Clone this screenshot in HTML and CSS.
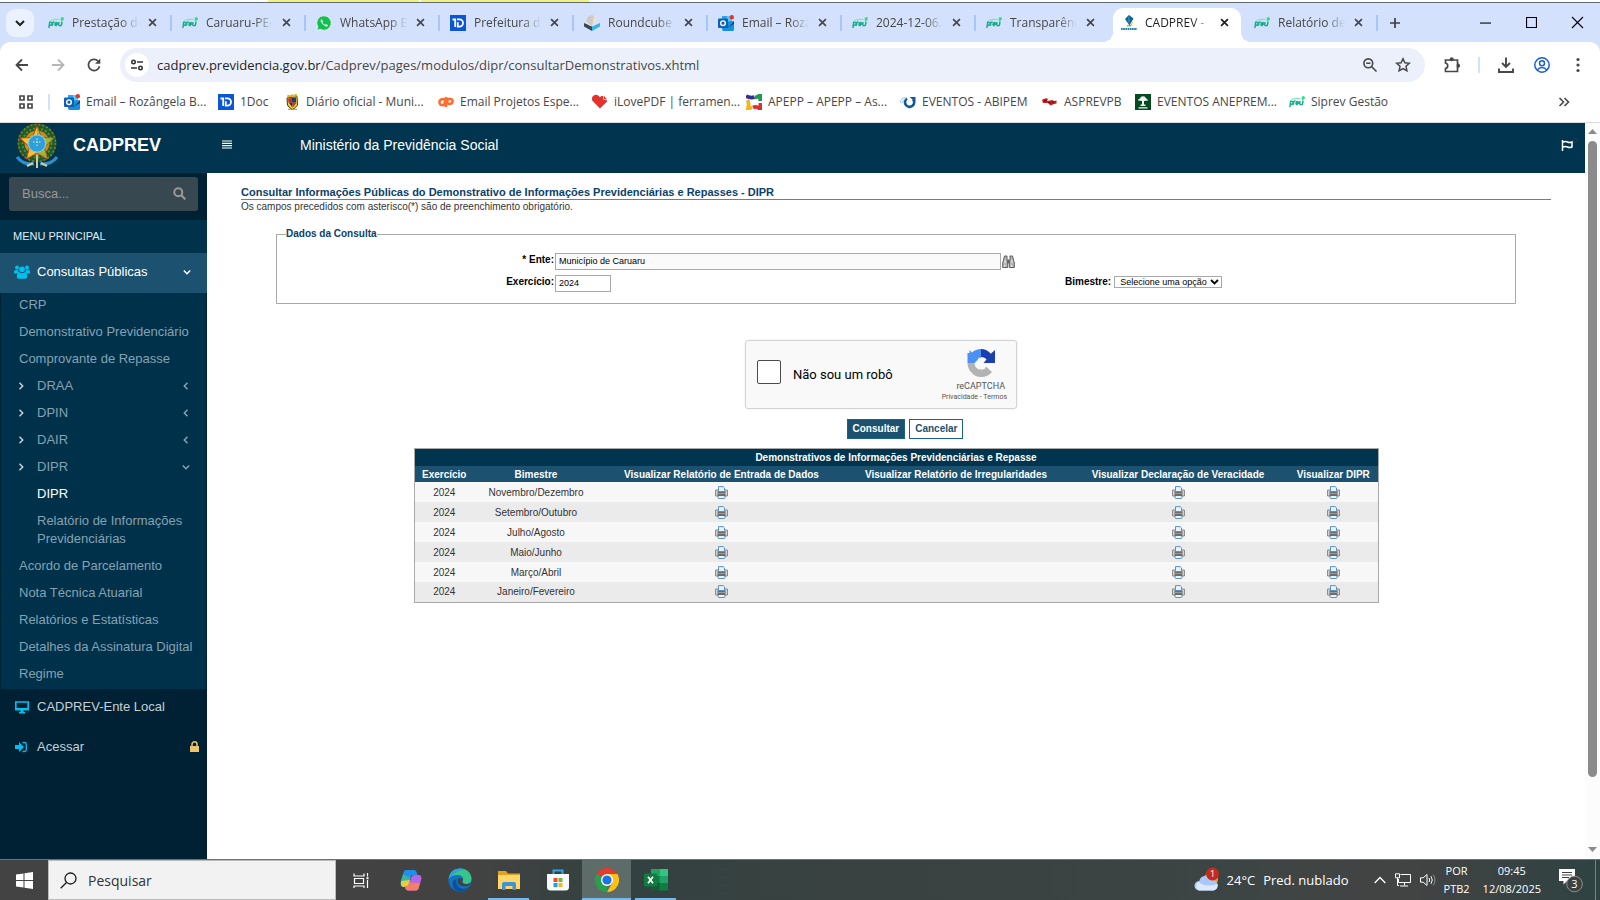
FILE: index.html
```html
<!DOCTYPE html>
<html lang="pt-BR">
<head>
<meta charset="utf-8">
<title>CADPREV - Consultar Demonstrativos</title>
<link rel="stylesheet" href="styles.css">
</head>
<body>
<svg class="sprite" aria-hidden="true">
  <symbol id="i-close" viewBox="0 0 10 10"><path d="M1.2 1.2l7.6 7.6M8.8 1.2L1.2 8.8" stroke="currentColor" stroke-width="1.9" fill="none"/></symbol>
  <symbol id="i-prev" viewBox="0 0 16 16"><g fill="none" stroke="#14ad8d" stroke-width="1.500"><path d="M.9 13l.8-5.800h1.100a1.500 1.500 0 01-.2 3H1.600M4.300 10.800l.5-3.200q.8-.8 1.700-.4M7 9.200h2.200q.3-1.800-.8-1.800T7 9.200q0 1.700 1.900 1.200M11 7l-.3 2.400q0 1.400 1.400 1.400t1.500-1.400L14 6.600"/><path d="M13.200 6l1.400-2.400" stroke="#2fdc86"/><path d="M2.500 5.600Q7 3.800 11.500 4.600" stroke="#7fe3bb" stroke-width="1.100"/></g><circle cx="14.300" cy="3.800" r="1.700" fill="#37dd85"/></symbol>
  <symbol id="i-whats" viewBox="0 0 16 16"><path d="M8 .8a7.200 7.200 0 11-3.700 13.400L.9 15.100l1-3.300A7.200 7.200 0 018 .8z" fill="#12c04e" stroke="#fff" stroke-width=".6"/><path d="M5.600 4.200c-1 .5-1.200 1.600-.6 2.900A9 9 0 009.200 11.300c1.300.6 2.400.1 2.700-1l-1.900-1.200-1 .9A6 6 0 016.300 7.300l.7-1z" fill="#fff"/></symbol>
  <symbol id="i-1doc" viewBox="0 0 16 16"><path d="M0 0h16v16H0z" fill="#0b55d9"/><path d="M2.500 4.500h2.700V12M7 4.400h2.400a3.600 3.600 0 010 7.200H7.800V7.200" fill="none" stroke="#fff" stroke-width="1.800"/></symbol>
  <symbol id="i-round" viewBox="0 0 16 16"><path d="M0 8l8 3.500V16l-8-4.500z" fill="#3b4750"/><path d="M16 8l-8 3.500V16l8-4.500z" fill="#35b3f3"/><circle cx="8" cy="5.600" r="5.400" fill="#e4e2df"/><path d="M2.600 6.500L8 11.500 10 .7A5.400 5.400 0 002.600 6.500z" fill="#cfcac5"/></symbol>
  <symbol id="i-outlook" viewBox="0 0 16 16"><path d="M4 1h10v9H4z" fill="#28a8ea"/><path d="M9 1h5v5H9z" fill="#50d0ff"/><path d="M4 8l12-2v8.500q0 1.500-1.500 1.500h-9Q4 16 4 14z" fill="#1490df"/><path d="M5 8l5.500 4L16 6.500V9l-7 4z" fill="#0a3f74"/><rect y="3.500" width="10" height="9.500" rx="1" fill="#0f5fb4"/><circle cx="5" cy="8.200" r="2.300" fill="none" stroke="#fff" stroke-width="1.400"/><circle cx="13.800" cy="2.200" r="2.200" fill="#e23434"/></symbol>
  <symbol id="i-cad" viewBox="0 0 16 16"><path d="M8 0l4.500 3.500L8.500 10.500 4 4z" fill="#12618e"/><path d="M8 0l1 5-.5 5.500L6.500 5z" fill="#1d89b5"/><path d="M9 10.500l3-4.500-1 5z" fill="#f0c52c"/><path d="M6 10.800h4" stroke="#42a05b"/><path d="M0 14h16" stroke="#257fa8" stroke-width="2" stroke-dasharray="1.700 .5"/></symbol>
  <symbol id="i-brasao" viewBox="0 0 16 16"><path d="M3 4l10-1.500.5 8.500q-2 3-5 4.500Q5 14 3.500 11z" fill="#f4dc1f" stroke="#3a341c"/><path d="M4 4.500L8 4v4.500H4.500zM8 8.500h4.500L8.500 14z" fill="#d42a2a"/><path d="M8 4l4-.5v5H8zM4.500 8.500H8V13z" fill="#28347f"/><path d="M3 3.500L3.500 1l2-.2.500 1 1-1.300 2 0 .5 1L11 0l2 .3V2.500z" fill="#d9b428"/><path d="M4 15.300h9" stroke="#b9902e"/></symbol>
  <symbol id="i-cp" viewBox="0 0 16 16"><g fill="none" stroke="#ff6c2c" stroke-width="2.500"><path d="M7 5.300H4.300a2.900 2.900 0 000 5.800H6L8.300 3"/><path d="M7.800 13L10 5h2.300a2.300 2.300 0 010 4.700H10"/></g></symbol>
  <symbol id="i-heart" viewBox="0 0 16 16"><path d="M8 14.500L1.200 7.600A3.900 3.900 0 016.700 2L8 3.300 9.300 2h1.900v3.400l3.900 1v1.200z" fill="#e5322d"/><path d="M11.800 1.800l3.400 3.600-3.400-.4z" fill="#e5322d"/></symbol>
  <symbol id="i-apepp" viewBox="0 0 16 16"><g fill="none" stroke-width="3.800"><path d="M0 2.300Q5 4.500 8.500 3" stroke="#34318c"/><path d="M9 3.500q3-.5 5.300-2.500v6" stroke="#1c9a50"/><path d="M14.500 9v6.500Q11 11.500 7 13.500" stroke="#dc3030"/><path d="M6 13.500l-4 1Q3.500 9 1.500 6" stroke="#f2b51a"/></g></symbol>
  <symbol id="i-abipem" viewBox="0 0 16 16"><path d="M7 4.500A4.600 4.600 0 1013 5.200" fill="none" stroke="#15569f" stroke-width="2.600"/><path d="M9.500 3h6v5z" fill="#15569f"/><path d="M.8 9Q-.2 4 5.500 3.600M2.600 9Q2 6 5.500 5" fill="none" stroke="#9fc4e4"/></symbol>
  <symbol id="i-aspb" viewBox="0 0 16 16"><path d="M0 6q4-3 6-1l-1 2 3-.5q2-1 4 .5l2.500-.5v3L12 10l-3.500 1.500-2.500-2.500-5 0z" fill="#cf1b1b"/><path d="M2 7l3-.5M6 8.500l3 .5M10 8.500l2.500-.5" stroke="#6a0e0e"/></symbol>
  <symbol id="i-anep" viewBox="0 0 16 16"><path d="M0 0h16v16H0z" fill="#064a22"/><path d="M3 6.500Q3 5 5 4.500 5.500 2.300 8 2.300T11 4.500q2 .5 2 2L9 7v3.500h1.500v1.500h-5v-1.500H7V7zM3.500 13.200h9v1.200h-9z" fill="#eef7ee"/></symbol>
  <symbol id="i-chev" viewBox="0 0 10 10"><path d="M3.500 1.800L6.700 5 3.500 8.200" fill="none" stroke="currentColor" stroke-width="1.500"/></symbol>
  <symbol id="i-print" viewBox="0 0 13 13"><rect x="3" y="7" width="7" height="5.500" rx="1" fill="#e8f3fd" stroke="#5d93bf"/><path d="M.6 4h2.900v6H.6zM9.500 4h2.900v6H9.500z" fill="#dcdcdc" stroke="#858585"/><path d="M2.500 5h8v5h-8z" fill="#6c6c6c"/><path d="M2.500 7.500h8" stroke="#9b9b9b"/><path d="M3.500.6h4.700l1.300 1.300v3.600h-6z" fill="#e5f2ff" stroke="#5c93c2"/></symbol>
</svg>

<div class="behind"><span></span><span></span></div>
<header class="browser">
  <div class="tabstrip">
    <button class="tab-search" aria-label="Pesquisar guias"><svg width="12" height="12" viewBox="0 0 12 12"><path d="M2 4l4 4 4-4" fill="none" stroke="#1f1f1f" stroke-width="2"/></svg></button>
    <div class="tab"><svg class="fav"><use href="#i-prev"/></svg><span>Prestação de</span><button aria-label="Fechar"><svg><use href="#i-close"/></svg></button></div>
    <div class="tab"><svg class="fav"><use href="#i-prev"/></svg><span>Caruaru-PE-</span><button aria-label="Fechar"><svg><use href="#i-close"/></svg></button></div>
    <div class="tab"><svg class="fav"><use href="#i-whats"/></svg><span>WhatsApp B</span><button aria-label="Fechar"><svg><use href="#i-close"/></svg></button></div>
    <div class="tab"><svg class="fav"><use href="#i-1doc"/></svg><span>Prefeitura de</span><button aria-label="Fechar"><svg><use href="#i-close"/></svg></button></div>
    <div class="tab"><svg class="fav"><use href="#i-round"/></svg><span>Roundcube</span><button aria-label="Fechar"><svg><use href="#i-close"/></svg></button></div>
    <div class="tab"><svg class="fav"><use href="#i-outlook"/></svg><span>Email – Rozâ</span><button aria-label="Fechar"><svg><use href="#i-close"/></svg></button></div>
    <div class="tab"><svg class="fav"><use href="#i-prev"/></svg><span>2024-12-06.</span><button aria-label="Fechar"><svg><use href="#i-close"/></svg></button></div>
    <div class="tab tab--before"><svg class="fav"><use href="#i-prev"/></svg><span>Transparênc</span><button aria-label="Fechar"><svg><use href="#i-close"/></svg></button></div>
    <div class="tab tab--active"><svg class="fav"><use href="#i-cad"/></svg><span>CADPREV -</span><button aria-label="Fechar"><svg><use href="#i-close"/></svg></button></div>
    <div class="tab"><svg class="fav"><use href="#i-prev"/></svg><span>Relatório de</span><button aria-label="Fechar"><svg><use href="#i-close"/></svg></button></div>
    <button class="new-tab" aria-label="Nova guia"><svg width="12" height="12" viewBox="0 0 12 12"><path d="M6 1v10M1 6h10" stroke="#3c4043" stroke-width="1.700"/></svg></button>
    <div class="window-controls">
      <button aria-label="Minimizar"><svg viewBox="0 0 10 10"><path d="M0 5.500h10" stroke="#000"/></svg></button>
      <button aria-label="Maximizar"><svg viewBox="0 0 10 10"><path d="M.5.5h9v9h-9z" fill="none" stroke="#000"/></svg></button>
      <button aria-label="Fechar janela"><svg viewBox="0 0 10 10"><path d="M0 0l10 10M10 0L0 10" stroke="#000"/></svg></button>
    </div>
  </div>
  <div class="toolbar">
    <button class="tool" aria-label="Voltar"><svg viewBox="0 0 16 16"><path d="M14 8H3M8 2.500L2.500 8 8 13.500" fill="none" stroke="#474747" stroke-width="1.800"/></svg></button>
    <button class="tool" aria-label="Avançar"><svg viewBox="0 0 16 16"><path d="M2 8h11M8 2.500L13.500 8 8 13.500" fill="none" stroke="#b4b6b9" stroke-width="1.800"/></svg></button>
    <button class="tool" aria-label="Recarregar"><svg viewBox="0 0 16 16"><path d="M13.500 9.200A5.600 5.600 0 1112 4l1.500 1.500" fill="none" stroke="#474747" stroke-width="1.700"/><path d="M14.300 1.500v5.300H9z" fill="#474747"/></svg></button>
    <div class="omnibox">
      <button class="site-info" aria-label="Informações do site"><svg width="14" height="14" viewBox="0 0 14 14" fill="none" stroke="#333" stroke-width="1.600"><circle cx="3.500" cy="4" r="1.700"/><path d="M7 4h6M1 10h6"/><circle cx="10.500" cy="10" r="1.700"/></svg></button>
      <div class="url"><b>cadprev.previdencia.gov.br</b>/Cadprev/pages/modulos/dipr/consultarDemonstrativos.xhtml</div>
      <button class="tool" aria-label="Zoom"><svg viewBox="0 0 16 16" fill="none" stroke="#474747" stroke-width="1.600"><circle cx="6.300" cy="6.300" r="4.400"/><path d="M9.500 9.500l5 5M4.200 6.300h4.200"/></svg></button>
      <button class="tool" aria-label="Favoritar"><svg viewBox="0 0 16 16" fill="none" stroke="#474747" stroke-width="1.500"><path d="M8 1.800l1.900 4 4.400.5-3.300 3 .9 4.400L8 11.500l-3.900 2.200.9-4.400-3.300-3 4.400-.5z"/></svg></button>
    </div>
    <button class="tool tool--ext" aria-label="Extensões"><svg viewBox="0 0 16 16"><path d="M1.500 3H13.500V7.200a1.400 1.400 0 010 2.900V14.500H1.500V11.500q2.200-.3 2.200-2.700T1.500 6z" fill="none" stroke="#474747" stroke-width="1.700"/><circle cx="7.700" cy="2.200" r="2" fill="#474747"/><circle cx="14.200" cy="8.700" r="1.800" fill="#474747"/></svg></button>
    <i class="sep"></i>
    <button class="tool" aria-label="Downloads"><svg viewBox="0 0 16 16" fill="none" stroke="#474747" stroke-width="1.900"><path d="M8 .5v9M4 6l4 4 4-4M1 11.500V15h14v-3.500"/></svg></button>
    <button class="tool" aria-label="Perfil"><svg viewBox="0 0 16 16" fill="none" stroke="#1a5fd0" stroke-width="1.500"><circle cx="8" cy="8" r="7.200"/><circle cx="8" cy="6.200" r="2.500"/><path d="M3.200 13q2-2.400 4.800-2.400t4.800 2.400"/></svg></button>
    <button class="tool" aria-label="Menu"><svg viewBox="0 0 16 16" fill="#474747"><circle cx="8" cy="2.500" r="1.600"/><circle cx="8" cy="8" r="1.600"/><circle cx="8" cy="13.500" r="1.600"/></svg></button>
  </div>
  <nav class="bookmarks">
    <button class="apps" aria-label="Apps"><svg width="14" height="14" viewBox="0 0 14 14" fill="none" stroke="#474747" stroke-width="1.700"><path d="M1 1h4v4H1zM9 1h4v4H9zM1 9h4v4H1zM9 9h4v4H9z"/></svg></button>
    <i class="sep"></i>
    <a href="#" class="bookmark"><svg class="fav"><use href="#i-outlook"/></svg>Email – Rozângela B...</a>
    <a href="#" class="bookmark bookmark--short"><svg class="fav"><use href="#i-1doc"/></svg>1Doc</a>
    <a href="#" class="bookmark"><svg class="fav"><use href="#i-brasao"/></svg>Diário oficial - Muni...</a>
    <a href="#" class="bookmark"><svg class="fav"><use href="#i-cp"/></svg>Email Projetos Espe...</a>
    <a href="#" class="bookmark"><svg class="fav"><use href="#i-heart"/></svg>iLovePDF | ferramen...</a>
    <a href="#" class="bookmark"><svg class="fav"><use href="#i-apepp"/></svg>APEPP – APEPP – As...</a>
    <a href="#" class="bookmark bookmark--mid"><svg class="fav"><use href="#i-abipem"/></svg>EVENTOS - ABIPEM</a>
    <a href="#" class="bookmark bookmark--small"><svg class="fav"><use href="#i-aspb"/></svg>ASPREVPB</a>
    <a href="#" class="bookmark"><svg class="fav"><use href="#i-anep"/></svg>EVENTOS ANEPREM...</a>
    <a href="#" class="bookmark"><svg class="fav"><use href="#i-prev"/></svg>Siprev Gestão</a>
    <button class="more" aria-label="Mais favoritos"><svg width="12" height="12" viewBox="0 0 12 12"><path d="M1.500 2l4 4-4 4M6.500 2l4 4-4 4" fill="none" stroke="#474747" stroke-width="1.600"/></svg></button>
  </nav>
</header>

<div class="viewport">
  <div class="app">
    <header class="topbar">
      <a href="#" class="brand">
        <svg width="44" height="46" viewBox="0 0 44 46">
          <circle cx="22" cy="20" r="15.500" fill="#c98a1e"/>
          <circle cx="22" cy="20" r="16" fill="none" stroke="#1f5a2b" stroke-width="7"/>
          <circle cx="22" cy="20" r="18.500" fill="none" stroke="#8a7f2c" stroke-width="1.500" stroke-dasharray="2 2"/>
          <circle cx="22" cy="20" r="14.500" fill="none" stroke="#5f8a2d" stroke-width="2" stroke-dasharray="2 2"/>
          <path d="M2 34q6 8 17 7M42 34q-6 8-17 7" fill="none" stroke="#2f8fcb" stroke-width="3"/>
          <path d="M12 43l6-3M32 43l-6-3M22 32v13" stroke="#cfc9a5" stroke-width="2"/>
          <path d="M22 3l4.700 11.500L39 15l-9.500 9 3 12L22 30l-10.500 6 3-12L5 15l12.300-.5z" fill="#efc62c" stroke="#c8401e"/>
          <path d="M22 3v27l10.500 6-3-12 9.500-9-12.300-.5z" fill="#5da23a" opacity=".5"/>
          <circle cx="22" cy="20.500" r="8.700" fill="#2f9fd8" stroke="#7ccbee" stroke-width="1.200"/>
          <path d="M22 15.500v9M18 19h8" stroke="#d9f2ff" stroke-dasharray="1.500 1.500"/>
        </svg>
        <span>CADPREV</span>
      </a>
      <button class="burger" aria-label="Alternar menu"><svg width="10" height="9" viewBox="0 0 10 9"><path d="M0 1h10M0 3.300h10M0 5.700h10M0 8h10" stroke="#fff" stroke-width="1.200"/></svg></button>
      <h1>Ministério da Previdência Social</h1>
      <a href="#" class="flag" aria-label="Avisos"><svg width="12" height="11" viewBox="0 0 12 11"><path d="M1.500 0v11M2 2q2.500-1 4.500 0t4.500 0V7q-2.500 1-4.500 0T2 7" fill="none" stroke="#fff" stroke-width="1.500"/></svg><span>0</span></a>
    </header>
    <div class="body">
      <aside class="sidebar">
        <form class="search">
          <input type="text" placeholder="Busca..." aria-label="Busca">
          <button type="button" aria-label="Buscar"><svg width="13" height="13" viewBox="0 0 13 13"><circle cx="5.300" cy="5.300" r="4" fill="none" stroke="#999" stroke-width="2"/><path d="M8.300 8.300l4 4" stroke="#999" stroke-width="2.200"/></svg></button>
        </form>
        <div class="menu-title">MENU PRINCIPAL</div>
        <a href="#" class="item item--open">
          <svg width="16" height="14" viewBox="0 0 16 14" fill="#00c0ef"><circle cx="3" cy="2.500" r="2"/><circle cx="13" cy="2.500" r="2"/><circle cx="8" cy="4.300" r="2.900"/><path d="M0 8V6.500Q.2 5 1.500 5h2.700Q4 7.200 5 7.500 3.500 8 3 8.500H1Q0 8.500 0 8zM16 8V6.500Q15.800 5 14.500 5h-2.700Q12 7.200 11 7.500q1.500.5 2 1h2q1 0 1-.5zM2.800 12q0-4.500 2.700-4.700Q8 9 10.500 7.300q2.700.2 2.700 4.700 0 1.800-1.700 1.800h-7q-1.700 0-1.700-1.800z"/></svg>
          <span>Consultas Públicas</span>
          <svg class="arrow arrow--down"><use href="#i-chev"/></svg>
        </a>
        <ul class="submenu">
          <li><a href="#">CRP</a></li>
          <li><a href="#">Demonstrativo Previdenciário</a></li>
          <li><a href="#">Comprovante de Repasse</a></li>
          <li><a href="#" class="branch"><svg><use href="#i-chev"/></svg><span>DRAA</span><svg class="arrow arrow--left"><use href="#i-chev"/></svg></a></li>
          <li><a href="#" class="branch"><svg><use href="#i-chev"/></svg><span>DPIN</span><svg class="arrow arrow--left"><use href="#i-chev"/></svg></a></li>
          <li><a href="#" class="branch"><svg><use href="#i-chev"/></svg><span>DAIR</span><svg class="arrow arrow--left"><use href="#i-chev"/></svg></a></li>
          <li><a href="#" class="branch"><svg><use href="#i-chev"/></svg><span>DIPR</span><svg class="arrow arrow--down"><use href="#i-chev"/></svg></a></li>
          <li><a href="#" class="leaf leaf--current">DIPR</a></li>
          <li><a href="#" class="leaf">Relatório de Informações Previdenciárias</a></li>
          <li><a href="#">Acordo de Parcelamento</a></li>
          <li><a href="#">Nota Técnica Atuarial</a></li>
          <li><a href="#">Relatórios e Estatísticas</a></li>
          <li><a href="#">Detalhes da Assinatura Digital</a></li>
          <li><a href="#">Regime</a></li>
        </ul>
        <a href="#" class="item">
          <svg width="16" height="14" viewBox="0 0 16 14"><path d="M1.800 2h12.400v7.500H1.800z" fill="none" stroke="#00c0ef" stroke-width="1.700"/><path d="M1 8h14v2.300H1zM6.500 10h3v2h1.500v1.500H5V12h1.500z" fill="#00c0ef"/></svg>
          <span>CADPREV-Ente Local</span>
        </a>
        <a href="#" class="item">
          <svg width="16" height="14" viewBox="0 0 16 14"><path d="M1 5h4V2l5 5-5 5V9H1z" fill="#00c0ef"/><path d="M8.500 2.500h2q1.800 0 1.800 1.800v5.400q0 1.800-1.800 1.800h-2" fill="none" stroke="#00c0ef" stroke-width="1.300"/></svg>
          <span>Acessar</span>
          <svg class="lock" width="9" height="11" viewBox="0 0 9 11"><path d="M0 5h9v6H0z" fill="#e9c46c"/><path d="M2 5.500V3.300a2.500 2.500 0 015 0v2.200" fill="none" stroke="#e9c46c" stroke-width="1.500"/></svg>
        </a>
      </aside>

      <main class="content">
        <h2>Consultar Informações Públicas do Demonstrativo de Informações Previdenciárias e Repasses - DIPR</h2>
        <p class="note">Os campos precedidos com asterisco(*) são de preenchimento obrigatório.</p>
        <form>
          <fieldset>
            <legend>Dados da Consulta</legend>
            <div class="fields">
              <label for="ente">* Ente:</label>
              <div class="ente">
                <input id="ente" type="text" value="Município de Caruaru" readonly>
                <button type="button" class="lookup" aria-label="Localizar ente"><svg width="13" height="14" viewBox="0 0 13 14"><path d="M2.500 1H5v3l.7 4v4.500H.7V8zM10.500 1H8v3l-.7 4v4.500h5V8z" fill="#b5b5b5" stroke="#5e5e5e"/><path d="M5.500 4.500h2v4h-2z" fill="#666"/><path d="M3 5v3M10 5v3M2.500 10v2M9.500 10v2" stroke="#f0f0f0"/></svg></button>
              </div>
              <label for="exercicio">Exercício:</label>
              <div><input id="exercicio" class="year" type="text" value="2024"></div>
              <div class="bimestre">
                <label for="bimestre">Bimestre:</label>
                <span class="select"><select id="bimestre"><option>Selecione uma opção</option></select><svg width="9" height="6" viewBox="0 0 9 6"><path d="M1 1l3.500 3.500L8 1" fill="none" stroke="#000" stroke-width="1.900"/></svg></span>
              </div>
            </div>
          </fieldset>

          <div class="captcha-row">
            <div class="captcha">
              <input type="checkbox" id="robo">
              <label for="robo">Não sou um robô</label>
              <div class="captcha-brand">
                <svg width="28" height="28" viewBox="0 0 28 28"><path d="M14 0Q8.500 0 5 3.500L2.500 1v3H0.500v10h7l3-3 1.500-2.500 2 .5z" fill="#4a90f5"/><path d="M14 0q6 0 9.800 4.800L28 1v13H16.500l3-3.500Q18 8 14 8z" fill="#1c3fb0"/><path d="M.5 14h7q0 3 2 5 2.500 2 6 1.500 3-.5 3.500-3l6 5.500Q21 28 14 28 8 28 4.500 23.500.5 20 .5 14z" fill="#b3b3b3"/></svg>
                <span>reCAPTCHA</span>
                <small><a href="#">Privacidade</a> - <a href="#">Termos</a></small>
              </div>
            </div>
          </div>
          <div class="actions">
            <button type="button" class="btn btn--primary">Consultar</button>
            <button type="button" class="btn">Cancelar</button>
          </div>
        </form>

        <table>
          <caption>Demonstrativos de Informações Previdenciárias e Repasse</caption>
          <colgroup><col class="c-ex"><col class="c-bi"><col class="c-en"><col class="c-ir"><col class="c-ir"><col class="c-di"></colgroup>
          <thead><tr><th>Exercício</th><th>Bimestre</th><th>Visualizar Relatório de Entrada de Dados</th><th>Visualizar Relatório de Irregularidades</th><th>Visualizar Declaração de Veracidade</th><th>Visualizar DIPR</th></tr></thead>
          <tbody>
            <tr><td>2024</td><td>Novembro/Dezembro</td><td><a href="#" aria-label="Imprimir"><svg><use href="#i-print"/></svg></a></td><td></td><td><a href="#" aria-label="Imprimir"><svg><use href="#i-print"/></svg></a></td><td><a href="#" aria-label="Imprimir"><svg><use href="#i-print"/></svg></a></td></tr>
            <tr><td>2024</td><td>Setembro/Outubro</td><td><a href="#" aria-label="Imprimir"><svg><use href="#i-print"/></svg></a></td><td></td><td><a href="#" aria-label="Imprimir"><svg><use href="#i-print"/></svg></a></td><td><a href="#" aria-label="Imprimir"><svg><use href="#i-print"/></svg></a></td></tr>
            <tr><td>2024</td><td>Julho/Agosto</td><td><a href="#" aria-label="Imprimir"><svg><use href="#i-print"/></svg></a></td><td></td><td><a href="#" aria-label="Imprimir"><svg><use href="#i-print"/></svg></a></td><td><a href="#" aria-label="Imprimir"><svg><use href="#i-print"/></svg></a></td></tr>
            <tr><td>2024</td><td>Maio/Junho</td><td><a href="#" aria-label="Imprimir"><svg><use href="#i-print"/></svg></a></td><td></td><td><a href="#" aria-label="Imprimir"><svg><use href="#i-print"/></svg></a></td><td><a href="#" aria-label="Imprimir"><svg><use href="#i-print"/></svg></a></td></tr>
            <tr><td>2024</td><td>Março/Abril</td><td><a href="#" aria-label="Imprimir"><svg><use href="#i-print"/></svg></a></td><td></td><td><a href="#" aria-label="Imprimir"><svg><use href="#i-print"/></svg></a></td><td><a href="#" aria-label="Imprimir"><svg><use href="#i-print"/></svg></a></td></tr>
            <tr><td>2024</td><td>Janeiro/Fevereiro</td><td><a href="#" aria-label="Imprimir"><svg><use href="#i-print"/></svg></a></td><td></td><td><a href="#" aria-label="Imprimir"><svg><use href="#i-print"/></svg></a></td><td><a href="#" aria-label="Imprimir"><svg><use href="#i-print"/></svg></a></td></tr>
          </tbody>
        </table>
      </main>
    </div>
  </div>
  <div class="scrollbar">
    <svg viewBox="0 0 9 5"><path d="M0 5l4.500-5L9 5z"/></svg>
    <div class="track"><i></i></div>
    <svg viewBox="0 0 9 5"><path d="M0 0h9L4.500 5z"/></svg>
  </div>
</div>

<footer class="taskbar">
  <button class="start" aria-label="Iniciar"><svg width="17" height="17" viewBox="0 0 17 17" fill="#fff"><path d="M0 2.400l7.500-1V8H0zM8.500 1.200L17 0v8H8.500zM0 9h7.500v6.600L0 14.600zM8.500 9H17v8l-8.500-1.200z"/></svg></button>
  <label class="win-search"><svg width="17" height="17" viewBox="0 0 17 17"><circle cx="10.500" cy="6.500" r="5.500" fill="none" stroke="#1c1c1c" stroke-width="1.300"/><path d="M6.500 10.500L.7 16.300" stroke="#1c1c1c" stroke-width="1.300"/></svg><input type="text" placeholder="Pesquisar"></label>
  <button class="task task--view" aria-label="Visão de tarefas"><svg width="17" height="17" viewBox="0 0 17 17" fill="none" stroke="#fff" stroke-width="1.200"><path d="M1 1.500v2.500h10V1.500M1.500 6.500h9v5h-9zM1 16v-2h10v2M14.500 1v3.500M14.500 8v8"/><path d="M13.500 6.200h2" stroke-width="2"/></svg></button>
  <button class="task" aria-label="Copilot"><svg viewBox="0 0 24 24"><path d="M7 2h8q2 0 2.600 2l.8 3h-4q-2 0-2.700 2.200L9.500 17Q9 19 6.500 19H4Q.5 18.500 2 13.500L4.300 5Q5 2 7 2z" fill="#1f8fe8"/><path d="M2 12.500L4 6.500l7.500 3L9.500 17Q9 19 6.500 19H4Q1 18 2 12.500z" fill="#37b5a0"/><path d="M2 13l9-1-1.500 5Q9 19 6.500 19H4q-2.500-.8-2-6z" fill="#e4cf38"/><path d="M17 22.500H9q-2 0-2.600-2L5.800 18q2.700.8 3.700-1l3-8q.6-2 3-2h4.500q3.500.5 2 5.500L19.700 20q-.7 2.500-2.700 2.500z" fill="#b465e8"/><path d="M17 22.500H9q-2 0-2.600-2L5.800 18q2.700.8 3.700-1l.8-2.500L21 15l-1.300 5q-.7 2.500-2.700 2.500z" fill="#f28068"/></svg></button>
  <button class="task" aria-label="Edge"><svg viewBox="0 0 24 24"><circle cx="12" cy="12" r="11.500" fill="#1273c4"/><path d="M.6 11Q2 .5 12 .5q9.500 0 11.400 8.500.8 6.500-5 7-4 0-4-2.500 1-1 .8-2.700Q14.500 7 9.500 7 3 7 .6 11z" fill="#39c48c"/><path d="M.6 11Q2 .5 12 .5q3 0 5 1Q7 3 .6 11z" fill="#2ba6d8"/><path d="M8.500 11Q7 17 12 20q5 2 9.500-1.500-4 5.500-10 5Q5 22.500 4.500 16 4.500 12 8.500 11z" fill="#0c4f9e"/><path d="M10 10.500q4-1 4.800 1-.3 1-.6 2 .4 3 5.800 2.500 1.500-.3 3-1.200-1 2.200-2.500 3-5 1.500-9-.8-2.700-2-1.500-6.500z" fill="#3a4544"/></svg></button>
  <button class="task task--open" aria-label="Explorador de arquivos"><svg viewBox="0 0 24 24"><path d="M1 3h8l2 2.500h12V21H1z" fill="#e2a41c"/><path d="M1 7h22v14H1z" fill="#ffd768"/><path d="M5 22v-6q0-2 2-2h10q2 0 2 2v6h-3.500v-4h-7v4z" fill="#3b94db"/></svg></button>
  <button class="task" aria-label="Microsoft Store"><svg viewBox="0 0 24 24"><path d="M7.500 6V2.500h9V6" fill="none" stroke="#2fa5e8" stroke-width="2"/><path d="M1 6h22v13q0 3.500-3.500 3.500h-15Q1 22.500 1 19z" fill="#f7f9fa"/><path d="M7.500 10h4v4h-4z" fill="#f04e2b"/><path d="M12.500 10h4v4h-4z" fill="#7cb82f"/><path d="M7.500 15h4v4h-4z" fill="#1f9fe6"/><path d="M12.500 15h4v4h-4z" fill="#f5b81c"/></svg></button>
  <button class="task task--active" aria-label="Chrome"><svg viewBox="0 0 24 24"><path d="M12 12L1.600 6A12 12 0 0122.400 6z" fill="#e33b2e"/><path d="M12 12v12A12 12 0 011.600 6z" fill="#28a148"/><path d="M12 6h10.400A12 12 0 0112 24l5.200-9z" fill="#fbc116"/><circle cx="12" cy="12" r="6" fill="#fff"/><circle cx="12" cy="12" r="4.600" fill="#1a73e8"/></svg></button>
  <button class="task task--open" aria-label="Excel"><svg viewBox="0 0 24 24"><path d="M7 1h8.500v11H7z" fill="#21a366"/><path d="M15.500 1H24v7h-8.500z" fill="#33c481"/><path d="M7 8h8.500v7H7z" fill="#107c41"/><path d="M15.500 8H24v7h-8.500z" fill="#21a366"/><path d="M7 15h17v7.500H7z" fill="#185c37"/><path d="M15.500 15H24v7.500h-8.500z" fill="#107c41"/><rect y="5.500" width="13" height="13" rx="1" fill="#107c41"/><path d="M4 8.800l5 6.500M9 8.800l-5 6.500" stroke="#fff" stroke-width="1.700"/></svg></button>
  <div class="tray">
    <button class="weather"><svg width="25" height="26" viewBox="0 0 25 26"><circle cx="17" cy="12" r="7" fill="#f3a32b"/><path d="M5 23.500a4.700 4.700 0 01.3-9.400 6.800 6.800 0 0113-.9A5.200 5.200 0 0119.500 23.500z" fill="#a9c8f8"/><path d="M5 23.500a4.700 4.700 0 01-.5-8.500Q12 21 23.500 17q1 5-4 6.500z" fill="#dce9fd"/><circle cx="18.500" cy="7" r="6.500" fill="#c42b1c"/><text x="18.500" y="10" text-anchor="middle">1</text></svg><span>24°C</span><span>Pred. nublado</span></button>
    <button class="tray-icon" aria-label="Ícones ocultos"><svg width="12" height="8" viewBox="0 0 12 8"><path d="M.7 7L6 1.500 11.300 7" fill="none" stroke="#fff" stroke-width="1.300"/></svg></button>
    <button class="tray-icon" aria-label="Rede"><svg width="16" height="14" viewBox="0 0 16 14" fill="none" stroke="#fff"><path d="M5.500 1.500h10v8h-12V6M9.500 9.500v3M5 13h8M.5.800h4v4h-4zM2.500 5v7.500H4"/></svg></button>
    <button class="tray-icon tray-icon--last" aria-label="Volume"><svg width="16" height="14" viewBox="0 0 16 14" fill="none" stroke="#fff"><path d="M.5 4.800h2.700L7 1.500v11L3.200 9.200H.500zM9 5q1.300 2 0 4M11 3.200q2.500 3.800 0 7.600"/><path d="M13.200 1.500q3.500 5.500 0 11" stroke="#8c9190"/></svg></button>
    <div class="two">POR<br>PTB2</div>
    <div class="two two--time">09:45<br>12/08/2025</div>
    <button class="notify" aria-label="Notificações"><svg width="24" height="26" viewBox="0 0 24 26"><path d="M0 2h16v12H8l-3.500 3.500V14H0z" fill="#fff"/><path d="M3 5.500h10M3 8h10M3 10.500h7" stroke="#3b4544" stroke-width="1.200"/><circle cx="15.500" cy="17" r="7.800" fill="#3b4241" stroke="#8b9190"/><text x="15.500" y="21" text-anchor="middle">3</text></svg></button>
    <i class="desktop"></i>
  </div>
</footer>
</body>
</html>
```
FILE: styles.css
```css
* { box-sizing: border-box; }
body { margin: 0; min-height: 100vh; display: flex; flex-direction: column; font-family: "Liberation Sans", Arial, sans-serif; background: #fff; color: #333; }
button { font: inherit; border: 0; background: none; padding: 0; color: inherit; display: flex; align-items: center; justify-content: center; }
a { color: inherit; text-decoration: none; }
.sprite { display: none; }
.fav { width: 16px; height: 16px; flex: none; }

.behind { height: 3px; display: flex; gap: 2px; padding-left: 268px; border-bottom: 1px solid #5f6b6e; }
.behind span { background: #f3f183; width: 151px; }
.behind span + span { width: 168px; }

.browser { font-family: "Open Sans", "Noto Sans", sans-serif; color: #474747; background: #d3e1fd; }
.tabstrip { height: 39px; display: flex; align-items: center; padding-left: 6px; }
.tab-search { width: 28px; height: 28px; border-radius: 9px; background: #ebf1fe; margin-right: 4px; }
.tab { position: relative; flex: 0 1 134px; min-width: 0; height: 34px; display: flex; align-items: center; padding: 0 15px 0 10px; font-size: 12px; }
.tab::after { content: ""; position: absolute; right: 0; top: 9px; width: 2px; height: 16px; background: #a6c6fa; }
.tab span { flex: 1; min-width: 0; margin: 0 9px 0 8px; overflow: hidden; white-space: nowrap; -webkit-mask-image: linear-gradient(90deg, #000 72%, transparent); mask-image: linear-gradient(90deg, #000 72%, transparent); }
.tab button svg { width: 9px; height: 9px; }
.tab--before::after { display: none; }
.tab--active { align-self: flex-end; background: #fff; color: #1f1f1f; border-radius: 10px 10px 0 0; flex-basis: 128px; margin: 0 3px; padding: 0 12px 5px 8px; }
.tab--active::before, .tab--active::after { content: ""; position: absolute; top: auto; bottom: 0; width: 10px; height: 10px; }
.tab--active::before { left: -10px; background: radial-gradient(circle at 0 0, transparent 10px, #fff 10px); }
.tab--active::after { right: -10px; background: radial-gradient(circle at 100% 0, transparent 10px, #fff 10px); }
.new-tab { width: 34px; height: 28px; }
.window-controls { display: flex; align-self: stretch; margin-left: auto; }
.window-controls button { width: 46px; }
.window-controls svg { width: 11px; height: 11px; overflow: visible; }

.toolbar { display: flex; align-items: center; height: 46px; padding: 0 4px; background: #fff; border-radius: 10px 10px 0 0; }
.tool { width: 36px; height: 34px; flex: none; }
.tool svg { width: 16px; height: 16px; }
.omnibox { flex: 1; height: 34px; display: flex; align-items: center; margin: 0 9px 0 8px; padding: 0 6px 0 5px; border-radius: 17px; background: #ecf0fa; }
.omnibox .tool { width: 33px; }
.site-info { width: 24px; height: 24px; border-radius: 12px; background: #fff; flex: none; }
.url { flex: 1; margin-left: 8px; font-size: 13px; white-space: nowrap; }
.url b { font-weight: 400; color: #1f1f1f; }
.sep { width: 2px; height: 16px; background: #d3e1fd; flex: none; margin: 0 8px; }
.bookmarks { display: flex; align-items: center; height: 35px; padding: 0 30px 7px 19px; background: #fff; border-bottom: 1px solid #d8dadd; }
.bookmarks .sep { margin: 0 14px 0 15px; }
.bookmark { flex: 0 1 154px; min-width: 0; display: flex; align-items: center; gap: 6px; font-size: 12px; white-space: nowrap; }
.bookmark--short { flex-basis: 66px; }
.bookmark--mid { flex-basis: 142px; }
.bookmark--small { flex-basis: 93px; }
.more { margin-left: auto; }

.viewport { flex: 1; display: flex; }
.app { flex: 1; display: flex; flex-direction: column; min-width: 0; }
.topbar { height: 50px; flex: none; display: flex; align-items: center; background: #00344f; color: #fff; }
.brand { width: 207px; display: flex; align-items: center; gap: 14px; padding-left: 15px; margin-top: -5px; font-size: 18px; font-weight: 700; }
.burger { margin: -8px 0 0 15px; }
.topbar h1 { margin: -6px 0 0 68px; font-size: 14px; font-weight: 400; }
.flag { margin: -6px 8px 0 auto; display: flex; align-items: center; }
.flag span { font-size: 8px; color: #2b3f4b; margin-top: -10px; }
.body { flex: 1; display: flex; }
.sidebar { width: 207px; flex: none; background: #002133; color: #c3d0d8; font-size: 13px; }
.search { display: flex; margin: 4px 9px 9px; height: 34px; border-radius: 3px; background: #374850; }
.search input { flex: 1; min-width: 0; border: 0; background: none; padding: 0 13px 2px; font: 13px "Liberation Sans", Arial, sans-serif; color: #999; }
.search input::placeholder { color: #999; opacity: 1; }
.search button { width: 36px; padding: 0 2px 2px 0; }
.menu-title { height: 33px; line-height: 32px; padding-left: 13px; font-size: 11px; color: #e3ebef; background: #00324c; }
.item { display: flex; align-items: center; height: 40px; padding: 0 15px 3px 14px; color: #c3d0d8; }
.item > svg:first-child { margin-right: 7px; }
.item span { flex: 1; }
.item--open { background: #1c5170; color: #fff; }
.lock { margin-right: -7px; }
.arrow { width: 10px; height: 10px; }
.arrow--down { transform: rotate(90deg); }
.arrow--left { transform: rotate(180deg); }
.submenu { list-style: none; margin: 0 1px -1px; padding: 0; background: #00314b; color: #86a2b1; }
.submenu a { display: block; padding: 3px 4px 6px 18px; line-height: 18px; }
.submenu .branch { display: flex; align-items: center; padding-right: 15px; }
.submenu .branch svg:first-child { width: 10px; height: 10px; margin-left: -3px; margin-right: 11px; color: #c3d0d8; }
.submenu .branch span { flex: 1; }
.submenu .leaf { padding-left: 36px; }
.submenu .leaf--current { color: #fff; }

.content { flex: 1; min-width: 0; padding: 13px 34px 0; font-size: 10px; }
.content h2 { margin: 0; height: 14px; line-height: 12px; font-size: 11px; color: #0b416b; border-bottom: 1px solid #4d9a55; }
.note { margin: 0; line-height: 14px; }
fieldset { margin: 13px 35px 0; padding: 0 0 11px; border: 1px solid #a9a9a9; min-width: 0; }
legend { margin-left: 9px; padding: 0; font-weight: 700; line-height: 14px; color: #0b416b; }
.fields { display: grid; grid-template-columns: 278fr 510fr 450fr; row-gap: 5px; padding-top: 12px; }
.fields label { font-weight: 700; color: #000; text-align: right; padding: 1px 1px 0 0; line-height: 12px; }
.fields input { height: 17px; border: 1px solid #a9a9a9; padding: 0 3px 1px; font: 9px "Liberation Sans", Arial, sans-serif; color: #000; background: #fff; }
.ente { grid-column: span 2; display: flex; gap: 1px; }
.ente input { width: 446px; background: #fafafa; }
.year { display: block; width: 56px; }
.bimestre { display: flex; align-items: flex-start; gap: 2px; }
.select { position: relative; display: flex; margin-top: 1px; }
.select select { appearance: none; width: 108px; height: 12px; border: 1px solid #a9a9a9; border-radius: 0; background: #fff; padding: 0 0 0 5px; font: 9px/10px "Liberation Sans", Arial, sans-serif; color: #000; }
.select svg { position: absolute; right: 3px; top: 3px; pointer-events: none; }

.captcha-row { display: flex; justify-content: center; padding: 36px 30px 0 0; }
.captcha { display: flex; align-items: center; width: 272px; height: 69px; padding: 0 9px 0 11px; border: 1px solid #d3d3d3; border-radius: 3px; background: #f9f9f9; box-shadow: 0 0 3px rgba(0, 0, 0, .08); font-family: Roboto, sans-serif; }
.captcha input { appearance: none; width: 24px; height: 24px; margin: 0 12px 5px 0; border: 1px solid #4b4b4b; border-radius: 2px; background: #fff; }
.captcha label { flex: 1; font-size: 13px; color: #000; }
.captcha-brand { display: flex; flex-direction: column; align-items: flex-end; color: #555; font-size: 9px; line-height: 11px; padding-top: 3px; }
.captcha-brand svg { margin: 0 12px 4px 0; }
.captcha-brand span { margin-right: 2px; }
.captcha-brand small { font-size: 7px; }
.actions { display: flex; justify-content: center; gap: 4px; padding: 10px 0 9px 18px; }
.btn { height: 20px; padding: 0 5px 1px; border: 1px solid #1c6288; font-weight: 700; font-size: 10px; color: #1c5170; background: #fff; }
.btn--primary { background: #1c5170; color: #fff; }

table { width: 73.5%; margin: 0 auto; table-layout: fixed; border-collapse: collapse; text-align: center; border: 1px solid #a9a9a9; border-top: 0; }
caption { height: 18px; line-height: 18px; background: #00344f; color: #fff; font-weight: 700; border: 1px solid #a9a9a9; border-bottom: 0; }
.c-ex { width: 60px; } .c-bi { width: 124px; } .c-en { width: 247px; } .c-ir { width: 222px; } .c-di { width: 89px; }
th { padding: 0; height: 16px; background: #1c5170; color: #fff; white-space: nowrap; }
td { padding: 0; height: 20px; }
td a, td svg { display: block; width: 13px; height: 13px; margin: 0 auto; }
tbody tr { background: #f7f7f7; }
tbody tr:nth-child(even) { background: #ebebeb; }

.scrollbar { width: 15px; display: flex; flex-direction: column; align-items: center; padding: 6px 0 7px; background: #fcfcfc; }
.scrollbar svg { width: 9px; height: 5px; fill: #8b8b8b; }
.track { flex: 1; padding: 7px 0; }
.track i { display: block; width: 9px; height: 91%; border-radius: 5px; background: #8b8b8b; }

.taskbar { height: 41px; display: flex; color: #fff; font-family: "Open Sans", "Noto Sans", sans-serif; background: linear-gradient(90deg, #434343 0, #424242 30%, #324140 38%, #3a4241 55%, #3d4544 78%, #434343 88%, #2f4242); border-top: 1px solid #6d7372; }
.start { width: 48px; }
.win-search { width: 288px; display: flex; align-items: center; gap: 11px; padding-left: 11px; background: #f2f2f2; border: 1px solid #bbb; }
.win-search input { flex: 1; min-width: 0; border: 0; padding: 0; background: none; font: 14px "Open Sans", "Noto Sans", sans-serif; }
.win-search input::placeholder { color: #333; opacity: 1; }
.task { position: relative; width: 49px; }
.task > svg { width: 24px; height: 24px; }
.task--view { width: 50px; }
.task--view > svg { width: 17px; height: 17px; }
.task--active { background: #5d6b69; }
.task--open::after, .task--active::after { content: ""; position: absolute; left: 4px; right: 4px; bottom: 0; height: 2px; background: #76b9ed; }
.task--active::after { left: 0; right: 0; }
.tray { margin-left: auto; display: flex; align-items: center; }
.weather { gap: 8px; font-size: 13px; margin-right: 25px; }
.weather text { font-size: 9px; fill: #fff; }
.tray-icon { margin-right: 9px; }
.tray-icon--last { margin-right: 8px; }
.two { font-size: 11px; line-height: 18px; text-align: center; }
.two--time { margin: 0 18px 0 13px; }
.notify { margin-right: 12px; }
.notify text { font-size: 11px; fill: #fff; }
.desktop { width: 5px; height: 41px; border-left: 1px solid #7b8685; }
```
